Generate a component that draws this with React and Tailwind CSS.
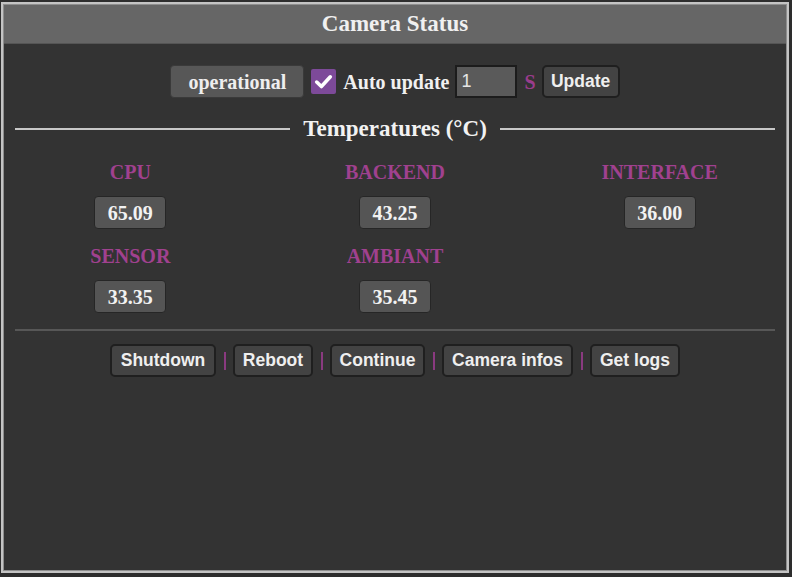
import React from "react";

const serif = { fontFamily: '"Liberation Serif", "Times New Roman", serif' };
const sans = { fontFamily: '"Liberation Sans", Arial, sans-serif' };

function Temp({ label, value }) {
  return (
    <div className="flex flex-col items-center">
      <div className="h-[24px] leading-[24px] text-[20px] font-bold text-[#a0418f]" style={serif}>
        {label}
      </div>
      <div
        className="mt-[12px] h-[33px] w-[72px] rounded-[4px] border border-[#262626] bg-[#555555] flex items-center justify-center text-[20px] font-bold text-[#f2f2f2]"
        style={serif}
      >
        {value}
      </div>
    </div>
  );
}

function Btn({ children, w }) {
  return (
    <div
      className="h-[33px] rounded-[5px] border-2 border-[#1f1f1f] bg-[#434343] flex items-center justify-center text-[17.5px] font-bold text-[#efefef]"
      style={{ ...sans, width: w }}
    >
      {children}
    </div>
  );
}

function Sep() {
  return <div className="w-[17px] flex justify-center"><div className="w-[2px] h-[18px] bg-[#8a3a80]" /></div>;
}

export default function App() {
  return (
    <div className="w-[792px] h-[577px] bg-[#2d2d2d] pt-[2px] pl-[1px]">
      <div className="w-[788px] h-[571px] border-2 border-[#c4c4c4]">
        <div className="w-full h-full border border-[#8e8e8e] bg-[#333333] flex flex-col">
          <div
            className="h-[39px] bg-[#666666] border-b border-[#555] flex items-center justify-center text-[23px] font-bold text-[#f0f0f0]"
            style={serif}
          >
            Camera Status
          </div>

          <div className="mt-[21px] h-[33px] flex items-center justify-center">
            <div
              className="w-[134px] h-[33px] rounded-[4px] bg-[#575757] border border-[#3a3a3a] flex items-center justify-center text-[20px] font-bold text-[#eeeeee]"
              style={serif}
            >
              operational
            </div>
            <div className="ml-[7px] w-[25px] h-[25px] rounded-[2px] bg-[#7d4a99] flex items-center justify-center">
              <svg width="21" height="21" viewBox="0 0 20 20">
                <path d="M3.5 10.5 L8 14.8 L16.5 5.5" fill="none" stroke="#ffffff" strokeWidth="3.4" strokeLinecap="round" strokeLinejoin="round" />
              </svg>
            </div>
            <div className="ml-[7px] text-[20px] font-bold text-[#f0f0f0]" style={serif}>
              Auto update
            </div>
            <div
              className="ml-[5px] w-[62px] h-[33px] border-2 border-[#1c1c1c] bg-[#5a5a5a] flex items-center pl-[5px] text-[18px] text-[#e6e6e6]"
              style={sans}
            >
              1
            </div>
            <div className="ml-[8px] text-[20px] font-bold text-[#9a3c8d]" style={serif}>
              S
            </div>
            <div className="ml-[6px]">
              <Btn w="78px">Update</Btn>
            </div>
          </div>

          <div className="mt-[19px] mx-[11px] h-[24px] flex items-center">
            <div className="flex-1 h-[2px] bg-[#c8c8c8]" />
            <div className="px-[13px] text-[23px] font-bold text-[#f2f2f2] leading-[24px]" style={serif}>
              Temperatures (°C)
            </div>
            <div className="flex-1 h-[2px] bg-[#c8c8c8]" />
          </div>

          <div className="mt-[19px] -mx-[6px] grid grid-cols-3 gap-y-[15px]">
            <Temp label="CPU" value="65.09" />
            <Temp label="BACKEND" value="43.25" />
            <Temp label="INTERFACE" value="36.00" />
            <Temp label="SENSOR" value="33.35" />
            <Temp label="AMBIANT" value="35.45" />
          </div>

          <div className="mt-[16px] mx-[11px] h-[2px] bg-[#575757]" />

          <div className="mt-[13px] flex items-center justify-center">
            <Btn w="106px">Shutdown</Btn>
            <Sep />
            <Btn w="80px">Reboot</Btn>
            <Sep />
            <Btn w="95px">Continue</Btn>
            <Sep />
            <Btn w="131px">Camera infos</Btn>
            <Sep />
            <Btn w="90px">Get logs</Btn>
          </div>
        </div>
      </div>
    </div>
  );
}
